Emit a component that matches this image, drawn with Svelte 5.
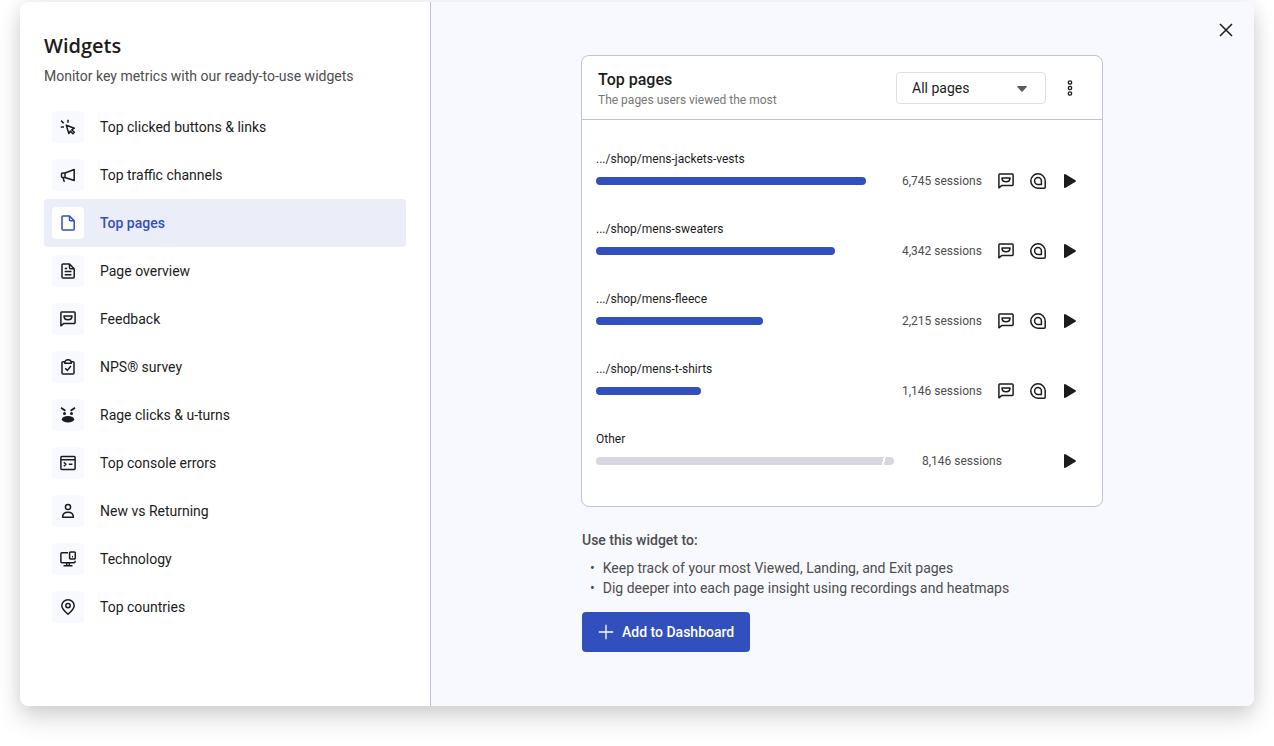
<script>
	const widgets = [
		{ icon: "click", label: "Top clicked buttons & links" },
		{ icon: "megaphone", label: "Top traffic channels" },
		{ icon: "file", label: "Top pages" },
		{ icon: "fileText", label: "Page overview" },
		{ icon: "feedback", label: "Feedback" },
		{ icon: "clipboard", label: "NPS® survey" },
		{ icon: "rage", label: "Rage clicks & u-turns" },
		{ icon: "console", label: "Top console errors" },
		{ icon: "person", label: "New vs Returning" },
		{ icon: "devices", label: "Technology" },
		{ icon: "pin", label: "Top countries" },
	];

	const pages = [
		{ path: ".../shop/mens-jackets-vests", sessions: "6,745", width: 90.6 },
		{ path: ".../shop/mens-sweaters", sessions: "4,342", width: 80.2 },
		{ path: ".../shop/mens-fleece", sessions: "2,215", width: 56 },
		{ path: ".../shop/mens-t-shirts", sessions: "1,146", width: 35.2 },
		{ path: "Other", sessions: "8,146", width: 100, other: true },
	];

	let selected = $state("Top pages");
	let filter = $state("All pages");
</script>

{#snippet icon(name)}
	<svg class="icon" viewBox="0 0 16 16" aria-hidden="true">
		{#if name === "click"}
			<path d="M1.1 1.6l2.6 2.6M8 .8v3M.8 8h3.2M6.3 6.3l8 2.9-2.6 1.6 2.6 2.5-1.4 1.4-2.6-2.6-1.500 2.400z" />
		{:else if name === "megaphone"}
			<path d="M5 6l9.2-3.5v11L5 10.5zM5 6H2.5a1 1 0 0 0-1 1v2.5a1 1 0 0 0 1 1H5M3.3 10.8c0 2 .3 3.2 1.4 3.9" />
		{:else if name === "file"}
			<path d="M3 .9h6.5L14.2 5.700v8.300a1 1 0 0 1-1 1H3a1 1 0 0 1-1-1V1.900a1 1 0 0 1 1-1zM9.500.9v3.800a1 1 0 0 0 1 1h3.700" />
		{:else if name === "fileText"}
			<path d="M3 .9h6.5L14.2 5.700v8.300a1 1 0 0 1-1 1H3a1 1 0 0 1-1-1V1.900a1 1 0 0 1 1-1zM9.500.9v3.800a1 1 0 0 0 1 1h3.700M4.700 5.400h2.500M4.700 8.500h6.800M4.700 11.700h6.800" />
		{:else if name === "feedback"}
			<path d="M.9 14.800V1.900a.8.800 0 0 1 .8-.8h12.600a.8.800 0 0 1 .8.800v9.700a.8.800 0 0 1-.8.800H3.900zM4 5h8c0 2.300-1.500 3.800-4 3.800S4 7.300 4 5z" />
		{:else if name === "clipboard"}
			<path d="M4.500 2.800H3a1 1 0 0 0-1 1V14a1 1 0 0 0 1 1h10a1 1 0 0 0 1-1V3.800a1 1 0 0 0-1-1h-1.500M4.700 4.200c0-2 1.300-3.400 3.300-3.400s3.300 1.400 3.300 3.400zM5.200 9.200l2.200 2.200 3.500-4.400" />
		{:else if name === "rage"}
			<path class="thick" d="M1 .8l4.400 3M15 .8l-4.400 3" />
			<g class="solid">
				<circle cx="4.500" cy="6.500" r="1.500" />
				<circle cx="11.500" cy="6.500" r="1.500" />
				<ellipse cx="8" cy="12.200" rx="6.200" ry="3.200" />
			</g>
		{:else if name === "console"}
			<path d="M1.900 1.600h12.200a1 1 0 0 1 1 1v10.800a1 1 0 0 1-1 1H1.900a1 1 0 0 1-1-1V2.600a1 1 0 0 1 1-1zM.9 4.800h14.200M3.800 7.200l2.200 2-2.200 2M8.800 9.300h3.600" />
		{:else if name === "person"}
			<circle cx="8" cy="4" r="2.600" />
			<path d="M2.600 14.300c0-3 2-5.100 5.400-5.100s5.400 2.100 5.400 5.100z" />
		{:else if name === "devices"}
			<path d="M8 1.800H1.900a1 1 0 0 0-1 1v8a1 1 0 0 0 1 1h12.200a1 1 0 0 0 1-1V9.700M6.700 12v2.400M9.300 12v2.400M3.500 14.800h9M10.500.9h3.900a.9.900 0 0 1 .9.900v5.300a.9.900 0 0 1-.9.900h-3.900a.9.900 0 0 1-.9-.9V1.800a.9.900 0 0 1 .9-.9zM12 5.800h1" />
		{:else if name === "pin"}
			<path d="M8 15.200C4.500 12.100 1.800 9.800 1.800 6.700a6.200 5.900 0 0 1 12.400 0c0 3.100-2.700 5.400-6.200 8.500z" />
			<circle cx="8" cy="6.600" r="2.200" />
		{:else if name === "heatmap"}
			<path d="M15.200 8v6.200a1 1 0 0 1-1 1H8A7.200 7.200 0 1 1 15.200 8zM11.400 8v3.400H8A3.400 3.400 0 1 1 11.400 8z" />
		{:else if name === "play"}
			<path class="solid" d="M2 2.100v11.800c0 .9.700 1.300 1.500.9l10-6.100a.8.800 0 0 0 0-1.400l-10-6.100C2.700.8 2 1.200 2 2.100z" />
		{:else if name === "more"}
			<g class="thin">
				<circle cx="8" cy="2.500" r="1.700" />
				<circle cx="8" cy="8" r="1.700" />
				<circle cx="8" cy="13.500" r="1.700" />
			</g>
		{:else if name === "plus"}
			<path class="thin" d="M8 .8v14.400M.8 8h14.400" />
		{:else if name === "close"}
			<path d="M2 2l12 12M14 2L2 14" />
		{/if}
	</svg>
{/snippet}

<main class="modal">
	<aside class="sidebar">
		<h1>Widgets</h1>
		<p class="intro">Monitor key metrics with our ready-to-use widgets</p>

		<nav class="widgets">
			{#each widgets as widget}
				<button
					class="widget"
					class:active={selected === widget.label}
					onclick={() => (selected = widget.label)}
				>
					<span class="tile">{@render icon(widget.icon)}</span>
					{widget.label}
				</button>
			{/each}
		</nav>
	</aside>

	<section class="preview">
		<button class="icon-btn close" aria-label="Close">{@render icon("close")}</button>

		<div class="content">
			<article class="card">
				<header class="card-header">
					<div class="card-title">
						<h2>Top pages</h2>
						<p>The pages users viewed the most</p>
					</div>
					<div class="select">
						<select bind:value={filter} aria-label="Pages">
							<option>All pages</option>
							<option>Landing pages</option>
							<option>Exit pages</option>
						</select>
						<svg class="caret" viewBox="0 0 10 6" aria-hidden="true">
							<path d="M.8 0h8.400a.5.500 0 0 1 .4.900L5.600 5.600a.8.800 0 0 1-1.200 0L.4.900A.5.500 0 0 1 .8 0z" />
						</svg>
					</div>
					<button class="icon-btn more" aria-label="More options">{@render icon("more")}</button>
				</header>

				<div class="rows">
					{#each pages as page}
						<div class="row" class:other={page.other}>
							<div class="path">{page.path}</div>
							<div class="track">
								<div class="bar" style="width: {page.width}%"></div>
							</div>
							<div class="side">
								<span class="sessions">{page.sessions} sessions</span>
								<div class="actions">
									{#if !page.other}
										<button class="icon-btn" aria-label="View feedback">{@render icon("feedback")}</button>
										<button class="icon-btn" aria-label="View heatmap">{@render icon("heatmap")}</button>
									{/if}
									<button class="icon-btn" aria-label="Play recordings">{@render icon("play")}</button>
								</div>
							</div>
						</div>
					{/each}
				</div>
			</article>

			<div class="usage">
				<h3>Use this widget to:</h3>
				<ul>
					<li>Keep track of your most Viewed, Landing, and Exit pages</li>
					<li>Dig deeper into each page insight using recordings and heatmaps</li>
				</ul>
				<button class="add">{@render icon("plus")}Add to Dashboard</button>
			</div>
		</div>
	</section>
</main>

<style>
	:global(body) {
		background: #fff;
		color: #1c1c1c;
		font-family: Roboto, "Liberation Sans", sans-serif;
		font-size: 14px;
		line-height: 20px;
	}

	h1,
	h2,
	h3,
	p,
	ul {
		margin: 0;
		padding: 0;
	}

	button,
	select {
		font: inherit;
		color: inherit;
		border: none;
		background: none;
		padding: 0;
		cursor: pointer;
	}

	.modal {
		display: flex;
		margin: 2px 20px 40px;
		border-radius: 8px;
		overflow: hidden;
		background: #fff;
		box-shadow:
			0 12px 24px rgba(0, 0, 0, 0.16),
			0 0 16px rgba(0, 0, 0, 0.08);
	}

	/* Icons */
	.icon {
		display: block;
		flex: none;
		width: 16px;
		height: 16px;
		fill: none;
		stroke: currentColor;
		stroke-width: 1.5;
		stroke-linejoin: round;
		overflow: visible;
	}

	.solid {
		fill: currentColor;
		stroke: none;
	}

	.thin {
		stroke-width: 1.3;
	}

	.thick {
		stroke-width: 1.8;
	}

	.icon-btn {
		display: grid;
		place-items: center;
		width: 24px;
		height: 24px;
	}

	/* Sidebar */
	.sidebar {
		box-sizing: border-box;
		flex: none;
		width: 411px;
		padding: 32px 24px 75px;
		border-right: 1px solid #c0c3d0;
	}

	h1 {
		font-family: "Open Sans", sans-serif;
		font-size: 20px;
		font-weight: 600;
		line-height: 24px;
	}

	.intro {
		margin-top: 8px;
		color: #4d4d4d;
	}

	.widgets {
		display: flex;
		flex-direction: column;
		margin-top: 17px;
	}

	.widget {
		display: flex;
		align-items: center;
		gap: 16px;
		padding: 8px;
		border-radius: 4px;
		text-align: left;
	}

	.tile {
		display: grid;
		place-items: center;
		width: 32px;
		height: 32px;
		border-radius: 4px;
		background: #f8f9fe;
	}

	.widget.active {
		background: #ebedf9;
		color: #324fbe;
		font-weight: 500;
	}

	.active .tile {
		background: #fff;
	}

	/* Preview */
	.preview {
		position: relative;
		flex: 1;
		display: flex;
		justify-content: center;
		padding: 53px 25px 53px 24px;
		background: #f8f9fe;
	}

	.close {
		position: absolute;
		top: 16px;
		right: 16px;
	}

	.content {
		width: 100%;
		max-width: 520px;
	}

	.card {
		margin: 0 -1px;
		border: 1px solid #c0c3d0;
		border-radius: 8px;
		background: #fff;
	}

	.card-header {
		display: flex;
		align-items: center;
		padding: 14px 20px 13px 16px;
		border-bottom: 1px solid #c0c3d0;
	}

	.card-title {
		flex: 1;
	}

	h2 {
		font-size: 16px;
		font-weight: 500;
		line-height: 20px;
	}

	.card-title p {
		margin-top: 4px;
		color: #767676;
		font-size: 12px;
		line-height: 12px;
	}

	.select {
		position: relative;
	}

	select {
		appearance: none;
		display: block;
		box-sizing: border-box;
		width: 150px;
		height: 32px;
		padding: 0 32px 0 15px;
		border: 1px solid #dedfe6;
		border-radius: 4px;
		background: #fff;
	}

	.caret {
		position: absolute;
		top: 14px;
		right: 19px;
		width: 10px;
		height: 6px;
		fill: #5c5c5c;
		pointer-events: none;
	}

	.more {
		margin-left: 12px;
	}

	.rows {
		display: grid;
		gap: 28px;
		padding: 31px 20px 33px 14px;
	}

	.row {
		display: grid;
		grid-template-columns: 1fr 188px;
		align-items: center;
		row-gap: 2px;
		font-size: 12px;
	}

	.path {
		grid-column: 1 / -1;
		line-height: 16px;
	}

	.bar {
		height: 8px;
		border-radius: 4px;
		background: #324fbe;
	}

	.other .bar {
		background: linear-gradient(
				105deg,
				transparent calc(100% - 12px),
				#fff calc(100% - 12px),
				#fff calc(100% - 10px),
				transparent calc(100% - 10px)
			)
			#d7d7e1;
	}

	.side {
		display: flex;
		align-items: center;
		justify-content: space-between;
		padding-left: 8px;
	}

	.other .side {
		padding-left: 28px;
	}

	.sessions {
		color: #4d4d4d;
	}

	.actions {
		display: flex;
		gap: 8px;
	}

	.usage {
		margin-top: 23px;
		color: #4d4d4d;
	}

	h3 {
		font-size: 14px;
		font-weight: 500;
	}

	ul {
		margin: 8px 0 14px;
		list-style: none;
	}

	li {
		display: flex;
		gap: 8px;
		padding-left: 8px;
	}

	li::before {
		content: "•";
		font-size: 14px;
	}

	.add {
		display: flex;
		align-items: center;
		gap: 8px;
		height: 40px;
		padding: 0 16px;
		border-radius: 4px;
		background: #324fbe;
		color: #fff;
		font-weight: 500;
	}
</style>
